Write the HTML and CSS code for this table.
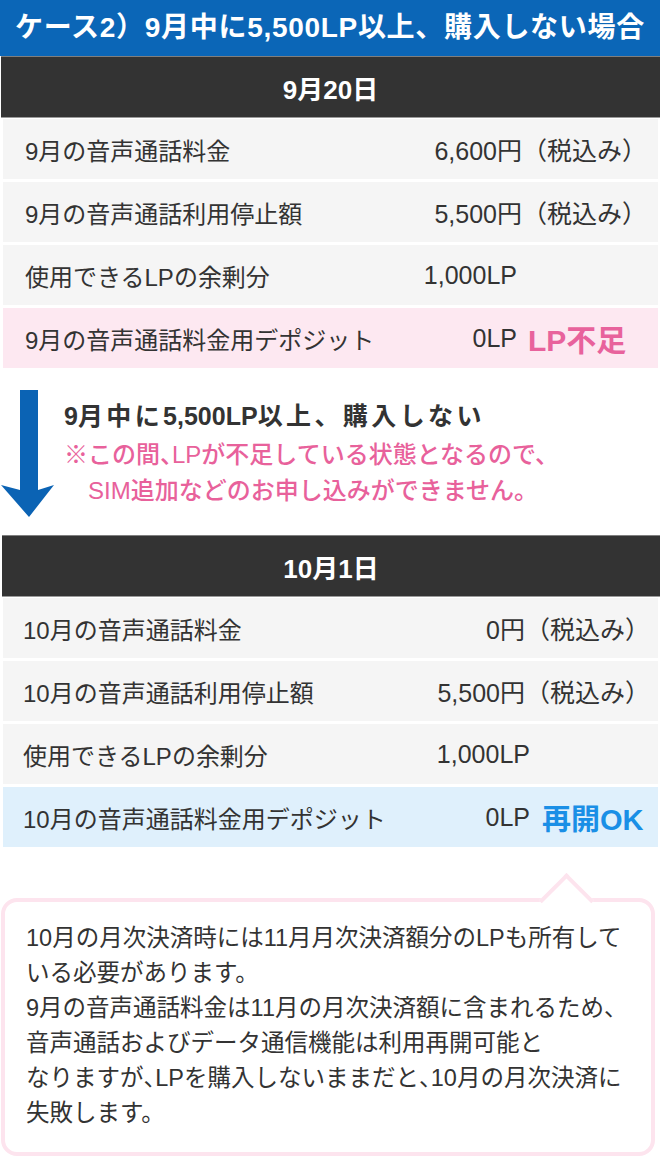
FILE: index.html
```html
<!DOCTYPE html>
<html lang="ja">
<head>
<meta charset="utf-8">
<title>ケース2</title>
<link rel="stylesheet" href="styles.css">
</head>
<body>
<div class="page">
  <h1 class="case-title">ケース2）9月中に5,500LP以上、購入しない場合</h1>

  <section class="block">
    <div class="date-bar">9月20日</div>
    <div class="rows">
      <div class="row"><span class="label">9月の音声通話料金</span><span class="value">6,600円（税込み）</span></div>
      <div class="row"><span class="label">9月の音声通話利用停止額</span><span class="value">5,500円（税込み）</span></div>
      <div class="row"><span class="label">使用できるLPの余剰分</span><span class="value">1,000LP<span class="note"></span></span></div>
      <div class="row row-pink"><span class="label">9月の音声通話料金用デポジット</span><span class="value">0LP<span class="note note-pink">LP不足</span></span></div>
    </div>
  </section>

  <div class="transition">
    <svg class="arrow" width="55" height="128" viewBox="0 0 55 128" aria-hidden="true">
      <polygon points="20,0 38,0 38,100 54,95 29,127 1,95 20,100" fill="#0b63b4"/>
    </svg>
    <div class="transition-text">
      <p class="t-main">9<span class="cjk">月中に</span>5,500LP<span class="cjk">以上、購入しない</span></p>
      <div class="t-warn"><span class="mark">※</span><span>この間<span class="half">、</span>LPが不足している状態となるので、<br>SIM追加などのお申し込みができません。</span></div>
    </div>
  </div>

  <section class="block block-second">
    <div class="date-bar">10月1日</div>
    <div class="rows rows-second">
      <div class="row"><span class="label">10月の音声通話料金</span><span class="value">0円（税込み）</span></div>
      <div class="row"><span class="label">10月の音声通話利用停止額</span><span class="value">5,500円（税込み）</span></div>
      <div class="row"><span class="label">使用できるLPの余剰分</span><span class="value">1,000LP<span class="note"></span></span></div>
      <div class="row row-blue"><span class="label">10月の音声通話料金用デポジット</span><span class="value">0LP<span class="note note-blue">再開OK</span></span></div>
    </div>
  </section>

  <div class="bubble">
    <span class="bubble-tip"></span>
    <p class="bubble-text">10月の月次決済時には11月月次決済額分のLPも所有して<br>いる必要があります。<br>9月の音声通話料金は11月の月次決済額に含まれるため、<br>音声通話およびデータ通信機能は利用再開可能と<br>なりますが<span class="half">、</span>LPを購入しないままだと<span class="half">、</span>10月の月次決済に<br>失敗します。</p>
  </div>
</div>
</body>
</html>
```

FILE: styles.css
```css
* { box-sizing: border-box; }

html, body {
  margin: 0;
  padding: 0;
  background: #ffffff;
}

body {
  font-family: "Liberation Sans", "Noto Sans CJK JP", sans-serif;
  color: #333333;
}

.page {
  width: 660px;
}

.case-title {
  margin: 0;
  height: 56px;
  background: #0b66b7;
  color: #ffffff;
  font-size: 28px;
  font-weight: bold;
  letter-spacing: 0.7px;
  line-height: 56px;
  text-align: center;
  white-space: nowrap;
}

.date-bar {
  margin-left: 1px;
  height: 62px;
  background: #333333;
  border-top: 1px solid #7f7f7f;
  border-bottom: 1px solid #9a9a9a;
  color: #ffffff;
  font-size: 26px;
  font-weight: bold;
  display: flex;
  align-items: center;
  justify-content: center;
}

.rows {
  margin: 1px 2px 0 3px;
  display: flex;
  flex-direction: column;
  gap: 3px;
}

.row {
  height: 60px;
  background: #f5f5f5;
  display: flex;
  align-items: center;
  justify-content: space-between;
  padding: 0 11px 0 22px;
  font-size: 24px;
  white-space: nowrap;
}

.row-pink { background: #fde8f1; }
.row-blue { background: #dff0fc; }

.value {
  display: flex;
  align-items: center;
  font-size: 25px;
}

.note {
  display: inline-block;
  width: 119px;
  margin-left: 11px;
  font-weight: bold;
  font-size: 30px;
  white-space: nowrap;
}

.note-pink { color: #e8629c; }
.note-blue { color: #1a8fe6; }

.rows-second .row { padding: 0 8px 0 20px; }
.rows-second .note { width: 108px; margin-left: 12px; font-size: 29px; }

.transition {
  display: flex;
  align-items: flex-start;
  padding: 22px 0 0 0;
  height: 167px;
}

.arrow {
  display: block;
  flex: none;
}

.transition-text {
  margin-left: 9px;
  padding-top: 11px;
}

.t-main {
  margin: 0;
  font-size: 25px;
  font-weight: bold;
  line-height: 30px;
  color: #333333;
  white-space: nowrap;
}

.t-main .cjk { letter-spacing: 3.4px; }

.t-warn {
  display: flex;
  margin-top: 6px;
  font-size: 24px;
  line-height: 36px;
  color: #e8619b;
  font-weight: 500;
  white-space: nowrap;
}

.mark { flex: none; }

.half { font-feature-settings: "halt" 1; }

.block-second .date-bar { margin-left: 2px; }

.bubble {
  position: relative;
  margin: 51px 0 0 1px;
  width: 654px;
  border: 4px solid #fde4ee;
  border-radius: 16px;
  padding: 19px 20px 21px 21px;
  background: #ffffff;
}

.bubble-tip {
  position: absolute;
  left: 542px;
  top: -21px;
  width: 39px;
  height: 39px;
  background: #ffffff;
  border-top: 4px solid #fde4ee;
  border-left: 4px solid #fde4ee;
  transform: rotate(45deg);
}

.bubble-text {
  position: relative;
  margin: 0;
  font-size: 23.5px;
  line-height: 35px;
  color: #333333;
  white-space: nowrap;
}
```
